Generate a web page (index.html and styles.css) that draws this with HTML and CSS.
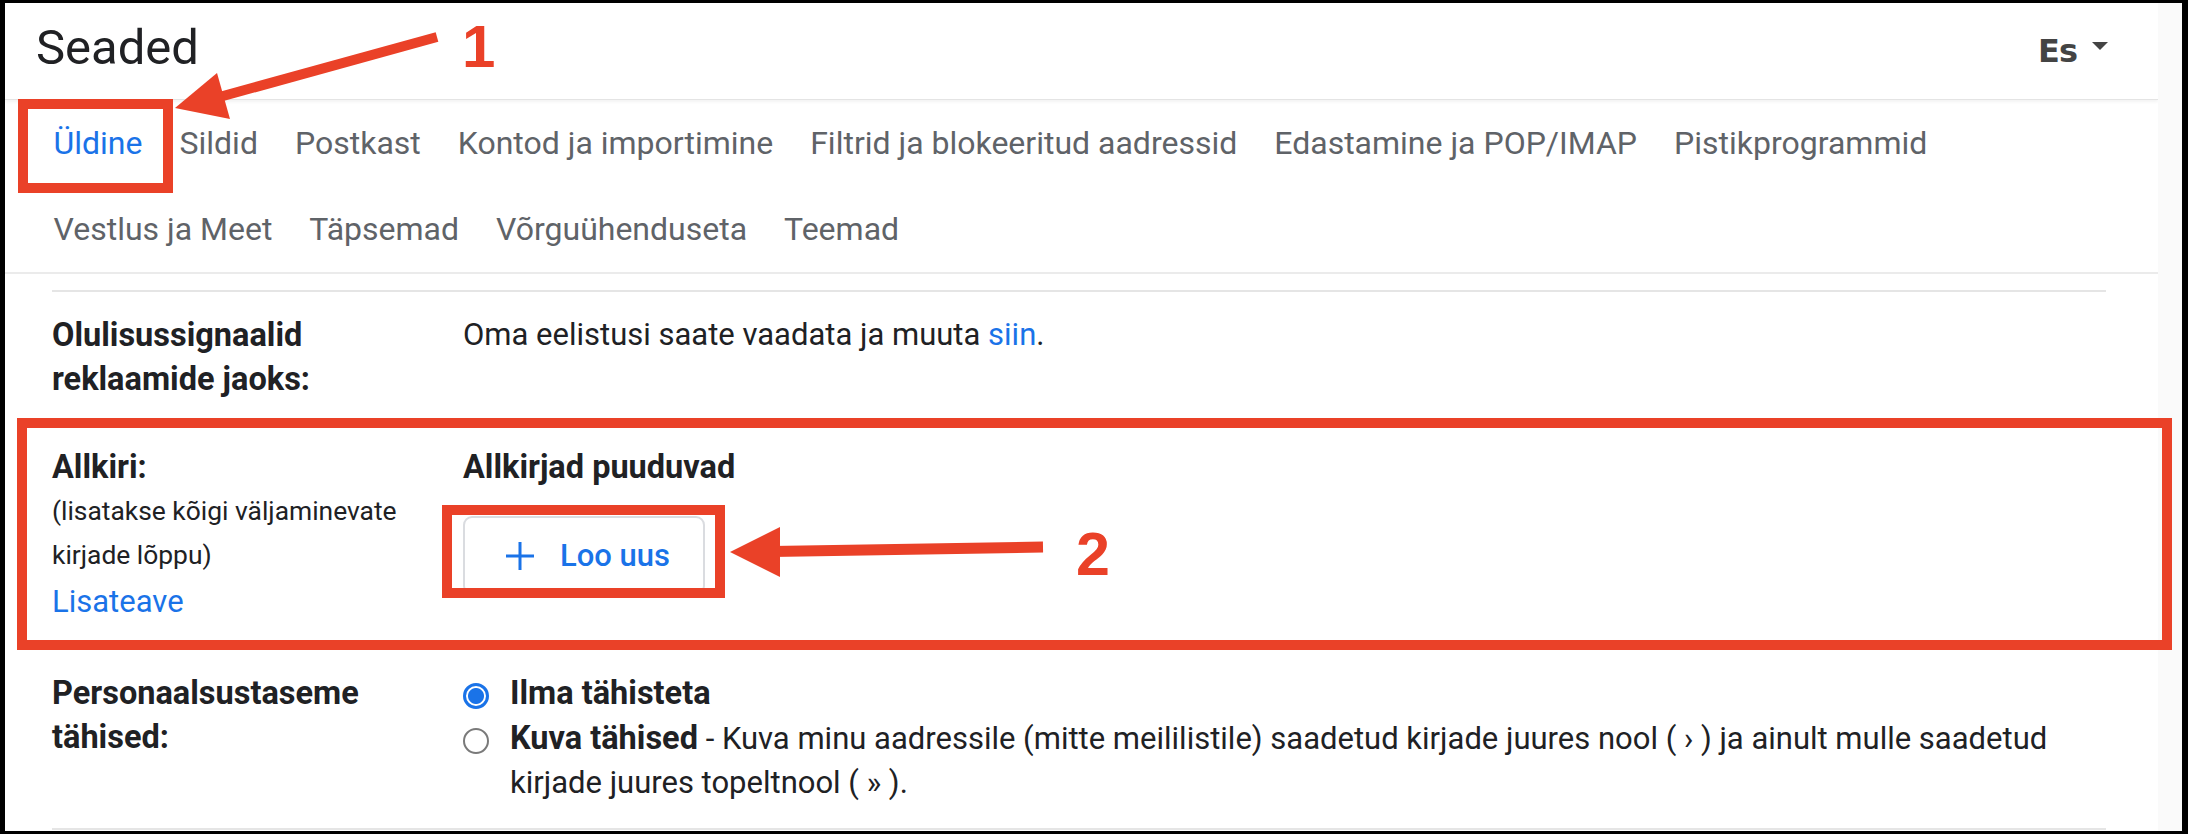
FILE: index.html
```html
<!DOCTYPE html>
<html lang="et">
<head>
<meta charset="utf-8">
<title>Seaded</title>
<link rel="stylesheet" href="styles.css">
</head>
<body>
<div class="frame">
  <div class="panel">
    <div class="main">
      <header class="header">
        <h1 class="title">Seaded</h1>
        <div class="account"><span class="account-name">Es</span><span class="caret"></span></div>
      </header>
      <nav class="tabs">
        <span class="tab active">Üldine</span>
        <span class="tab">Sildid</span>
        <span class="tab">Postkast</span>
        <span class="tab">Kontod ja importimine</span>
        <span class="tab">Filtrid ja blokeeritud aadressid</span>
        <span class="tab">Edastamine ja POP/IMAP</span>
        <span class="tab">Pistikprogrammid</span>
        <span class="tab">Vestlus ja Meet</span>
        <span class="tab">Täpsemad</span>
        <span class="tab">Võrguühenduseta</span>
        <span class="tab">Teemad</span>
      </nav>
      <div class="settings">
        <div class="row row-ads">
          <div class="label">Olulisussignaalid reklaamide jaoks:</div>
          <div class="value">Oma eelistusi saate vaadata ja muuta <span class="link">siin</span>.</div>
        </div>
        <div class="row row-sig">
          <div class="label">
            <div>Allkiri:</div>
            <div class="note">(lisatakse kõigi väljaminevate kirjade lõppu)</div>
            <div class="link learn">Lisateave</div>
          </div>
          <div class="value">
            <div class="sig-title">Allkirjad puuduvad</div>
            <button class="btn-new" type="button">
              <svg class="plus" viewBox="0 0 32 32" width="32" height="32" aria-hidden="true"><path d="M16 2v28M2 16h28" stroke="#1a73e8" stroke-width="3" fill="none"/></svg>
              <span class="btn-label">Loo uus</span>
            </button>
          </div>
        </div>
        <div class="row row-ind">
          <div class="label">Personaalsustaseme tähised:</div>
          <div class="value">
            <div class="radio-row">
              <div class="radio-cell"><span class="radio checked"></span></div>
              <div class="opt"><b>Ilma tähisteta</b></div>
            </div>
            <div class="radio-row">
              <div class="radio-cell"><span class="radio"></span></div>
              <div class="opt"><b>Kuva tähised</b> - Kuva minu aadressile (mitte meililistile) saadetud kirjade juures nool ( › ) ja ainult mulle saadetud kirjade juures topeltnool ( » ).</div>
            </div>
          </div>
        </div>
      </div>
    </div>
    <div class="gutter"></div>
  </div>

  <div class="anno-box box1"></div>
  <div class="anno-box box2"></div>
  <div class="anno-box box3"></div>
  <svg class="arrow arrow1" width="280" height="100" viewBox="170 30 280 100" aria-hidden="true">
    <line x1="214" y1="98.5" x2="437" y2="37" stroke="#ea4128" stroke-width="10"/>
    <polygon points="175,108 217,73 230,119" fill="#ea4128"/>
  </svg>
  <svg class="arrow arrow2" width="320" height="60" viewBox="725 522 320 60" aria-hidden="true">
    <line x1="772" y1="551.5" x2="1043" y2="547" stroke="#ea4128" stroke-width="11"/>
    <polygon points="730,552 780,527 780,577" fill="#ea4128"/>
  </svg>
  <span class="num num1">1</span>
  <span class="num num2">2</span>
</div>
</body>
</html>
```
FILE: styles.css
```css
html, body {
  margin: 0;
  padding: 0;
  width: 2188px;
  height: 834px;
  background: #000;
  overflow: hidden;
}

.frame {
  position: relative;
  width: 2188px;
  height: 834px;
  padding: 3px 6px 3px 5px;
  box-sizing: border-box;
  font-family: Roboto, "Noto Sans", Arial, sans-serif;
  color: #202124;
}

.panel {
  display: flex;
  height: 828px;
  background: #fff;
}

.main {
  width: 2153px;
}

.gutter {
  flex: 1;
  background: #fafafa;
}

/* header */
.header {
  display: flex;
  justify-content: space-between;
  align-items: flex-start;
  height: 96px;
  border-bottom: 1px solid #e4e4e4;
  box-shadow: 0 2px 3px rgba(0, 0, 0, 0.05);
}

.title {
  margin: 0;
  padding: 15px 0 0 31px;
  font-family: Roboto, sans-serif;
  font-weight: 400;
  font-size: 49px;
  line-height: 59px;
  color: #202124;
}

.account {
  display: flex;
  align-items: flex-start;
  padding: 29px 50px 0 0;
}

.account-name {
  font-family: "DejaVu Sans", sans-serif;
  font-weight: 700;
  font-size: 32px;
  line-height: 38px;
  color: #444;
  letter-spacing: -1px;
}

.caret {
  width: 0;
  height: 0;
  margin: 10px 0 0 15px;
  border-left: 8px solid transparent;
  border-right: 8px solid transparent;
  border-top: 8px solid #444;
}

/* tabs */
.tabs {
  display: flex;
  flex-wrap: wrap;
  padding-left: 30px;
  border-bottom: 2px solid #ebebeb;
}

.tab {
  padding: 0 18.5px;
  height: 86px;
  line-height: 86px;
  font-size: 32px;
  font-weight: 400;
  color: #5f6368;
  white-space: nowrap;
}

.tab.active {
  color: #1a73e8;
}

/* settings table */
.settings {
  margin: 16px 0 0 47px;
  width: 2054px;
  border-top: 2px solid #e5e5e5;
  border-bottom: 2px solid #e5e5e5;
}

.row {
  display: grid;
  grid-template-columns: 411px 1fr;
}

.row-ads { padding: 21px 0 22px; }
.row-sig { padding: 22px 0 22px; }
.row-ind { padding: 25px 0 23px; }

.label {
  min-width: 0;
  padding-right: 40px;
  font-size: 32.5px;
  font-weight: 700;
  line-height: 44px;
  color: #202124;
}

.note {
  font-size: 26.4px;
  font-weight: 400;
  line-height: 44px;
}

.learn {
  margin-top: 3px;
  font-size: 31px;
  font-weight: 400;
}

.value {
  min-width: 0;
  font-size: 31px;
  line-height: 44px;
  font-weight: 400;
  color: #202124;
}

.opt b {
  font-size: 32.5px;
  font-weight: 700;
}

.link {
  color: #1a73e8;
}

.sig-title {
  font-size: 32.5px;
  font-weight: 700;
}

.btn-new {
  display: flex;
  align-items: center;
  gap: 24px;
  margin-top: 27px;
  height: 79px;
  padding: 0 33px 0 39px;
  border: 2px solid #dadce0;
  border-radius: 9px;
  background: #fff;
  font-family: Roboto, sans-serif;
  font-size: 31px;
  font-weight: 500;
  line-height: 40px;
  color: #1a73e8;
}

.plus {
  display: block;
  flex: none;
}

.radio-row {
  display: grid;
  grid-template-columns: 47px 1fr;
}

.radio-cell {
  height: 44px;
}

.radio {
  display: block;
  width: 26px;
  height: 26px;
  margin-top: 12px;
  box-sizing: border-box;
  border: 2.5px solid #7a7a7a;
  border-radius: 50%;
}

.radio.checked {
  border: 3px solid #1a73e8;
  background: radial-gradient(circle, #1a73e8 0 7.5px, #fff 8.5px);
}

/* annotations */
.anno-box {
  position: absolute;
  box-sizing: border-box;
  border: 10px solid #ea4128;
  pointer-events: none;
}

.box1 { left: 18px; top: 99px; width: 155px; height: 94px; }
.box2 { left: 17px; top: 418px; width: 2155px; height: 232px; }
.box3 { left: 442px; top: 505px; width: 283px; height: 93px; }

.arrow {
  position: absolute;
  display: block;
  pointer-events: none;
}

.arrow1 { left: 170px; top: 30px; }
.arrow2 { left: 725px; top: 522px; }

.num {
  position: absolute;
  font-family: "Liberation Sans", Arial, sans-serif;
  font-weight: 700;
  color: #ea4128;
}

.num1 {
  left: 462px;
  top: 17px;
  font-size: 60px;
  line-height: 60px;
}

.num2 {
  left: 1076px;
  top: 524px;
  font-size: 61px;
  line-height: 61px;
}
```
